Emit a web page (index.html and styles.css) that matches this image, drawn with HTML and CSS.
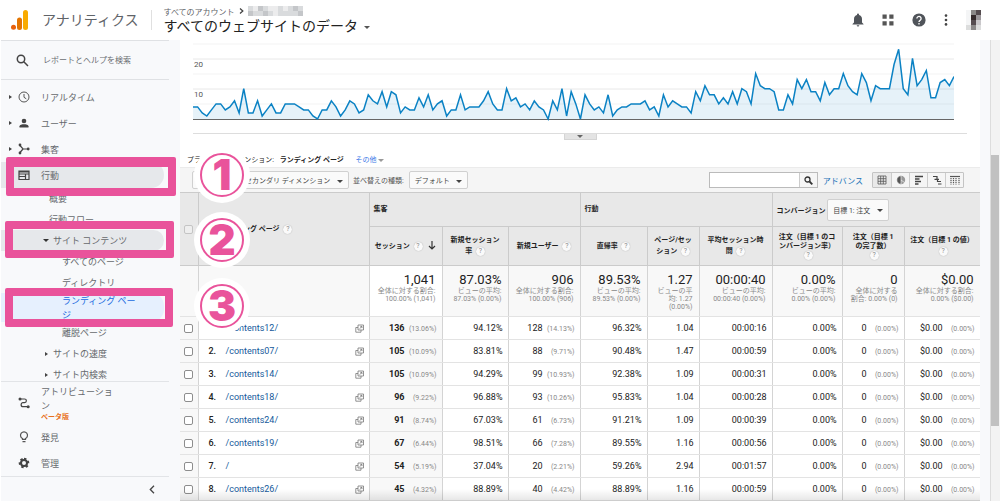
FILE: index.html
```
<!DOCTYPE html>
<html lang="ja">
<head>
    <meta charset="UTF-8">
    <meta name="viewport" content="width=device-width, initial-scale=1.0">
    <title>アナリティクス - ランディング ページ</title>
    <link rel="stylesheet" href="styles.css">
</head>
<body>
    <header class="topbar">
        <svg class="logo" viewBox="0 0 18 20"><rect x="12" y="0" width="5" height="20" rx="2.5" fill="#f9ab00"/><rect x="6" y="7.500" width="5" height="12.500" rx="2.500" fill="#e37400"/><circle cx="2.500" cy="17.300" r="2.500" fill="#e8600c"/></svg>
        <span class="product">アナリティクス</span>
        <div class="account">
            <div class="breadcrumb">すべてのアカウント
                <svg width="5" height="8" viewBox="0 0 5 8"><path d="M1 1.500 3.800 4 1 6.500" fill="none" stroke="#444" stroke-width="1.300"/></svg>
                <svg class="masked" width="55" height="10" viewBox="0 0 11 2" shape-rendering="crispEdges"><path fill="#d9dbdd" d="M0 0h11v2H0z"/><path fill="#c4c6c9" d="M0 1h1v1H0zM2 0h1v1H2zM3 1h1v1H3zM9 0h1v1H9zM10 1h1v1h-1z"/><path fill="#ececed" d="M1 0h1v1H1zM4 0h2v1H4zM5 1h1v1H5zM7 0h1v1H7z"/></svg>
            </div>
            <button class="view-picker">すべてのウェブサイトのデータ <i class="caret"></i></button>
        </div>
        <div class="tools">
            <button aria-label="通知"><svg width="12" height="14" viewBox="0 0 12 14" fill="#50545a"><path d="M6 0.500a1 1 0 0 1 1 1v.6c1.900.5 3 2 3 4v3.400l1.500 1.500v.5H.5V11L2 9.500V6.100c0-2 1.100-3.500 3-4v-.6a1 1 0 0 1 1-1zM4.700 12.300h2.600a1.300 1.300 0 0 1-2.600 0z"/></svg></button>
            <button aria-label="アプリ"><svg width="12" height="12" viewBox="0 0 12 12" fill="#555"><path d="M.5.500h4.200v4.200H.5zM7.300.500h4.200v4.200H7.300zM.5 7.300h4.200v4.200H.5zM7.300 7.300h4.200v4.200H7.300z"/></svg></button>
            <button aria-label="ヘルプ"><svg width="14" height="14" viewBox="0 0 14 14"><circle cx="7" cy="7" r="6.600" fill="#50545a"/><path d="M4.900 5.500a2.100 2.100 0 1 1 3.300 1.700C7.300 7.800 7 8.100 7 9M7 10v1.400" fill="none" stroke="#fff" stroke-width="1.300"/></svg></button>
            <button aria-label="その他のメニュー"><svg width="4" height="12" viewBox="0 0 4 12" fill="#444"><circle cx="2" cy="1.600" r="1.300"/><circle cx="2" cy="6" r="1.300"/><circle cx="2" cy="10.400" r="1.300"/></svg></button>
            <svg class="avatar" width="15" height="20" viewBox="0 0 3 4" shape-rendering="crispEdges"><path fill="#f4f5f6" d="M0 0h3v4H0z"/><path fill="#8b8989" d="M1 0h1v1H1zM1 3h1v1H1z"/><path fill="#554c50" d="M2 0h1v1H2zM1 2h1v1H1z"/><path fill="#352b2d" d="M1 1h1v1H1z"/><path fill="#9c989c" d="M2 1h1v1H2z"/><path fill="#c9c7ca" d="M2 2h1v1H2z"/><path fill="#dcdddd" d="M0 3h1v1H0zM2 3h1v1H2z"/></svg>
        </div>
    </header>

    <div class="layout">
        <aside class="sidebar">
            <label class="report-search">
                <svg width="13" height="13" viewBox="0 0 13 13" fill="none" stroke="#444" stroke-width="1.500"><circle cx="5" cy="5" r="3.700"/><path d="m7.800 7.800 4.200 4.200"/></svg>
                <input type="text" placeholder="レポートとヘルプを検索">
            </label>
            <nav class="reports">
                <a href="#" class="item"><i class="arrow"></i><svg class="icon" viewBox="0 0 12 12" fill="none" stroke="#555"><circle cx="6" cy="6" r="5"/><path d="M6 3v3.300L8.300 7.800"/></svg>リアルタイム</a>
                <a href="#" class="item"><i class="arrow"></i><svg class="icon" viewBox="0 0 12 12" fill="#444"><circle cx="6" cy="4" r="2.300"/><path d="M1.500 10.500V9.300C1.500 7.700 4 7.200 6 7.200s4.500.5 4.500 2.100v1.200z"/></svg>ユーザー</a>
                <a href="#" class="item"><i class="arrow"></i><svg class="icon" viewBox="0 0 12 12" fill="none" stroke="#444" stroke-width="1.200"><path d="M1.500 2 5 6h5M1.500 10 5 6"/><g fill="#444" stroke="none"><circle cx="2" cy="2" r="1.400"/><circle cx="2" cy="10" r="1.400"/><circle cx="10.200" cy="6" r="1.400"/></g></svg>集客</a>
                <a href="#" class="item active"><svg class="icon" viewBox="0 0 12 12" fill="none" stroke="#444" stroke-width="1.200"><path d="M1 2h10v8.500H1zM1 3h10M1 5h10M7.500 5v5.500M1 7.500h6.500"/></svg>行動</a>
                <a href="#" class="sub">概要</a>
                <a href="#" class="sub">行動フロー</a>
                <a href="#" class="sub group active"><i class="arrow down"></i>サイト コンテンツ</a>
                <a href="#" class="sub leaf">すべてのページ</a>
                <a href="#" class="sub leaf">ディレクトリ</a>
                <a href="#" class="sub leaf current">ランディング ペー<br>ジ</a>
                <a href="#" class="sub leaf">離脱ページ</a>
                <a href="#" class="sub group"><i class="arrow"></i>サイトの速度</a>
                <a href="#" class="sub group"><i class="arrow"></i>サイト内検索</a>
            </nav>
            <div class="fixed-items">
                <a href="#" class="item attribution"><svg class="icon" viewBox="0 0 12 12" fill="none" stroke="#444" stroke-width="1.200"><path d="M2 2h4.500c2.500 0 2.500 3.700 0 3.700H5c-2.500 0-2.500 4 0 4h5"/><g fill="#444" stroke="none"><circle cx="2" cy="2" r="1.500"/><circle cx="10.200" cy="9.700" r="1.500"/></g></svg><span>アトリビューショ<br>ン<small>ベータ版</small></span></a>
                <a href="#" class="item"><svg class="icon" viewBox="0 0 12 12" fill="none" stroke="#555" stroke-width="1.200"><path d="M4.500 8.300V7.500a3.500 3.500 0 1 1 3 0v.8zM4.500 10.700h3"/></svg>発見</a>
                <a href="#" class="item"><svg class="icon" viewBox="0 0 12 12"><path fill="none" stroke="#444" stroke-width="2.600" stroke-dasharray="2.200 2" d="M6 2a4 4 0 1 1 0 8 4 4 0 0 1 0-8z"/><circle cx="6" cy="6" r="3" fill="none" stroke="#444" stroke-width="2"/></svg>管理</a>
            </div>
            <button class="collapse" aria-label="折りたたむ"><svg width="6" height="9" viewBox="0 0 6 9"><path d="M5 .8 1.300 4.500 5 8.200" fill="none" stroke="#444" stroke-width="1.300"/></svg></button>
        </aside>

        <main class="report">
            <div class="chart">
                <span class="tick tick-20">20</span>
                <span class="tick tick-10">10</span>
                <svg id="sessions-chart" preserveAspectRatio="none"></svg>
            </div>
            <div class="splitter"><button aria-label="グラフを閉じる"><i class="caret"></i></button></div>

            <div class="dimensions">プライマリ ディメンション: <b>ランディング ページ</b> <a href="#">その他 <i class="caret"></i></a></div>

            <div class="toolbar">
                <button class="drop secondary">セカンダリ ディメンション <i class="caret"></i></button>
                <span class="sort-label">並べ替えの種類:</span>
                <button class="drop">デフォルト <i class="caret"></i></button>
                <div class="table-search">
                    <input type="text" aria-label="表を検索">
                    <button aria-label="検索"><svg width="9" height="9" viewBox="0 0 9 9" fill="none" stroke="#333" stroke-width="1.300"><circle cx="3.500" cy="3.500" r="2.500"/><path d="m5.500 5.500 2.800 2.800" stroke-width="1.800"/></svg></button>
                </div>
                <a href="#" class="advanced">アドバンス</a>
                <div class="views">
                    <button class="on" aria-label="表"><svg viewBox="0 0 10 10" fill="none" stroke="#555" stroke-width=".8"><path d="M1 1h8v8H1zM1 3.700h8M1 6.300h8M3.700 1v8M6.300 1v8"/></svg></button>
                    <button aria-label="割合"><svg viewBox="0 0 10 10"><circle cx="5" cy="5" r="4.200" fill="#999"/><path d="M5 5V.8A4.200 4.200 0 0 0 5 9.200zM5 5l3.500 2.500" fill="#555" stroke="#fff" stroke-width=".6"/></svg></button>
                    <button aria-label="パフォーマンス"><svg viewBox="0 0 10 10" stroke="#444" stroke-width="1.400"><path d="M1 1.500h8M1 4h4.500M1 6.500h6M1 9h3.500"/></svg></button>
                    <button aria-label="比較"><svg viewBox="0 0 10 10" fill="none" stroke="#444" stroke-width="1.200"><path d="M1 1.500h4.500M5 1v3.500M2.500 4.300H7M5.500 4v3M5 6.500h4M6 9h3.500"/></svg></button>
                    <button aria-label="ピボット"><svg viewBox="0 0 10 10" fill="none" stroke="#555" stroke-width="1.200"><path d="M0 1.500h10"/><path d="M1 3v6.500M3.500 3v6.500M6 3v6.500M9 3v6.500" stroke-dasharray="1.300 .7"/></svg></button>
                </div>
            </div>

            <table class="data">
                <colgroup>
                    <col class="c-check"><col class="c-page"><col class="c-sessions"><col class="c-rate"><col class="c-users"><col class="c-bounce"><col class="c-pages"><col class="c-time"><col class="c-conv"><col class="c-done"><col class="c-value">
                </colgroup>
                <thead>
                    <tr class="groups">
                        <th rowspan="2"><input type="checkbox" aria-label="すべて選択"></th>
                        <th rowspan="2" class="page-head">ランディング ページ <i class="help">?</i></th>
                        <th colspan="3">集客</th>
                        <th colspan="3">行動</th>
                        <th colspan="3">コンバージョン <button class="drop goal">目標 1: 注文 <i class="caret"></i></button></th>
                    </tr>
                    <tr class="metrics">
                        <th class="sorted">セッション <i class="help">?</i> <svg width="8" height="9" viewBox="0 0 8 9" fill="none" stroke="#333" stroke-width="1.200"><path d="M4 0v8M1 5l3 3 3-3"/></svg></th>
                        <th>新規セッション<br>率 <i class="help">?</i></th>
                        <th>新規ユーザー <i class="help">?</i></th>
                        <th>直帰率 <i class="help">?</i></th>
                        <th>ページ/セッ<br>ション <i class="help">?</i></th>
                        <th>平均セッション時<br>間 <i class="help">?</i></th>
                        <th class="tight">注文（目標 1 のコ<br>ンバージョン率）<br><i class="help">?</i></th>
                        <th class="tight">注文（目標 1<br>の完了数）<br><i class="help">?</i></th>
                        <th>注文（目標 1 の値）<br><i class="help">?</i></th>
                    </tr>
                </thead>
                <tbody id="rows">
                    <tr class="totals">
                        <td></td>
                        <td></td>
                        <td class="sorted"><strong>1,041</strong>全体に対する割合:<br>100.00% (1,041)</td>
                        <td><strong>87.03%</strong>ビューの平均:<br>87.03% (0.00%)</td>
                        <td><strong>906</strong>全体に対する割合:<br>100.00% (906)</td>
                        <td><strong>89.53%</strong>ビューの平均:<br>89.53% (0.00%)</td>
                        <td><strong>1.27</strong>ビューの平<br>均: 1.27<br>(0.00%)</td>
                        <td><strong>00:00:40</strong>ビューの平均:<br>00:00:40 (0.00%)</td>
                        <td><strong>0.00%</strong>ビューの平均:<br>0.00% (0.00%)</td>
                        <td><strong>0</strong>全体に対する<br>割合: 0.00% (0)</td>
                        <td><strong>$0.00</strong>全体に対する割合:<br>0.00% ($0.00)</td>
                    </tr>
                </tbody>
            </table>
        </main>
        <div class="scrollbar"><div class="thumb"></div></div>
    </div>

    <!-- tutorial steps drawn over the screen -->
    <div class="frame frame-1"></div>
    <div class="frame frame-2"></div>
    <div class="frame frame-3"></div>
    <div class="step step-1"><span>1</span></div>
    <div class="step step-2"><span>2</span></div>
    <div class="step step-3"><span>3</span></div>

    <script src="script.js"></script>
</body>
</html>
```
FILE: styles.css
```
:root {
    --pink: #e9539b;
    --link: #15599b;
    --line: #d4d4d4;
}

* {
    box-sizing: border-box;
}

body {
    margin: 0;
    height: 100vh;
    display: flex;
    flex-direction: column;
    overflow: hidden;
    position: relative;
    background: #fff;
    color: #222;
    font-family: Roboto, "Noto Sans CJK JP", sans-serif;
    font-size: 9px;
}

a {
    text-decoration: none;
    color: inherit;
}

button, input {
    font-family: inherit;
    margin: 0;
}

button {
    background: none;
    border: 0;
    padding: 0;
    color: inherit;
}

svg {
    flex: none;
}

.caret {
    display: inline-block;
    border: 3px solid transparent;
    border-top-color: currentColor;
    border-bottom: 0;
    vertical-align: middle;
}

/* header */
.topbar {
    display: flex;
    align-items: center;
    flex: none;
    height: 40px;
    padding: 0 19px 0 11px;
}

.logo {
    width: 18px;
    height: 20px;
}

.product {
    margin-left: 13px;
    padding-right: 13px;
    font-size: 14px;
    line-height: 20px;
    color: #5f6368;
    border-right: 1px solid #e0e0e0;
}

.account {
    padding-left: 11px;
}

.breadcrumb {
    display: flex;
    align-items: center;
    gap: 4px;
    height: 12px;
    font-size: 8px;
    color: #5f6368;
}

.view-picker {
    display: block;
    font-size: 14px;
    line-height: 18px;
    color: #222;
}

.view-picker .caret {
    margin-left: 3px;
    color: #555;
}

.tools {
    display: flex;
    align-items: center;
    gap: 18px;
    margin-left: auto;
}

.tools button {
    display: flex;
}

.layout {
    display: flex;
    flex: 1;
    min-height: 0;
}

/* left menu */
.sidebar {
    display: flex;
    flex-direction: column;
    flex: none;
    width: 179px;
    margin-left: 1px;
    background: #f8f9fb;
    color: #66696d;
}

.report-search {
    display: flex;
    align-items: center;
    flex: none;
    gap: 14px;
    height: 40px;
    margin-right: 11px;
    padding-left: 15px;
    border-top: 1px solid #dfe1e4;
    border-bottom: 1px solid #dfe1e4;
}

.report-search input {
    width: 120px;
    border: 0;
    padding: 0;
    background: none;
    font-size: 8px;
}

.report-search input::placeholder {
    color: #6b6e72;
}

.reports {
    flex: 1;
    min-height: 0;
    padding-top: 4px;
    overflow: hidden;
}

.item {
    display: flex;
    align-items: center;
    height: 26px;
    padding-left: 17px;
    position: relative;
}

.icon {
    width: 12px;
    height: 12px;
    margin-right: 11px;
}

.arrow {
    border: 2px solid transparent;
    border-left: 3px solid #444;
    border-right: 0;
}

.item .arrow {
    position: absolute;
    left: 8px;
}

.arrow.down {
    border: 3px solid transparent;
    border-top-color: #333;
    border-bottom: 0;
}

.item.active, .sub.active {
    margin-right: 16px;
    background: #e6e8eb;
    border-radius: 0 13px 13px 0;
}

.sub {
    display: flex;
    align-items: center;
    height: 21px;
    padding-left: 48px;
}

.sub.group {
    gap: 4px;
    padding-left: 42px;
}

.sub.group .arrow:not(.down) {
    margin: 0 1px 0 2px;
}

.sub.leaf {
    padding-left: 61px;
}

.sub.current {
    height: 29px;
    margin-right: 16px;
    background: #e6f0fe;
    border-radius: 0 13px 13px 0;
    color: #1a6be0;
    line-height: 14px;
}

.fixed-items {
    flex: none;
    margin-right: 11px;
    border-top: 1px solid #e2e4e7;
    border-bottom: 1px solid #e2e4e7;
}

.attribution {
    height: 42px;
    line-height: 14px;
}

.attribution small {
    display: block;
    font-size: 7px;
    font-weight: bold;
    line-height: 8px;
    color: #e8711c;
}

.collapse {
    flex: none;
    height: 24px;
    padding-right: 25px;
    text-align: right;
}

/* report */
.report {
    flex: 1;
    min-width: 0;
    overflow: hidden;
    position: relative;
}

/* soft shade where the table runs under the window edge */
.report::after {
    content: "";
    position: absolute;
    left: 0;
    right: 0;
    bottom: 0;
    height: 12px;
    background: linear-gradient(transparent, rgba(0, 0, 0, 0.1));
}

.chart {
    position: relative;
    height: 93px;
    padding: 0 26px 0 13px;
}

.chart svg {
    display: block;
    width: 100%;
    height: 81px;
}

.tick {
    position: absolute;
    left: 14px;
    font-size: 8px;
    line-height: 10px;
    color: #555;
}

.tick-20 {
    top: 20px;
}

.tick-10 {
    top: 50px;
}

.splitter {
    height: 20px;
    margin: 0 13px;
    border-top: 1px solid #ddd;
    text-align: center;
}

.splitter button {
    display: block;
    width: 33px;
    height: 6px;
    margin: 0 auto;
    background: #e4e4e4;
    border: 1px solid #d5d5d5;
    border-top: 0;
    line-height: 3px;
}

.splitter .caret {
    display: block;
    margin: 0 auto;
    width: 0;
    color: #666;
}

.dimensions {
    height: 14px;
    padding-left: 7px;
    font-size: 7px;
    line-height: 14px;
}

.dimensions b {
    margin-left: 4px;
}

.dimensions a {
    margin-left: 10px;
    color: #3b78e7;
}

.dimensions .caret {
    color: #999;
}

.toolbar {
    display: flex;
    align-items: center;
    height: 25px;
    padding: 0 16px 0 12px;
    background: #f5f5f5;
    border-top: 1px solid #ebebeb;
    font-size: 7px;
    color: #555;
}

.drop {
    height: 18px;
    padding: 0 5px;
    background: #fafafa;
    border: 1px solid #d0d0d0;
    border-radius: 2px;
    font-size: 7px;
    white-space: nowrap;
    color: #444;
}

.drop .caret {
    margin-left: 5px;
}

.secondary {
    width: 157px;
    text-align: right;
}

.sort-label {
    margin: 0 5px 0 4px;
}

.table-search {
    display: flex;
    width: 109px;
    height: 16px;
    margin-left: auto;
    border: 1px solid #bbb;
}

.table-search input {
    flex: 1;
    min-width: 0;
    padding: 0 3px;
    border: 0;
    background: #fff;
    font-size: 8px;
}

.table-search button {
    display: flex;
    align-items: center;
    justify-content: center;
    width: 18px;
    border-left: 1px solid #ccc;
}

.advanced {
    margin: 0 9px 0 5px;
    font-size: 8px;
    color: #1a73b8;
}

.views {
    display: flex;
    height: 16px;
    border: 1px solid #c4c4c4;
    border-radius: 1px;
}

.views button {
    display: flex;
    align-items: center;
    justify-content: center;
    width: 18px;
}

.views button + button {
    border-left: 1px solid #ccc;
}

.views svg {
    width: 10px;
    height: 10px;
}

.views .on {
    background: #e9e9e9;
}

/* data table */
.data {
    width: 100%;
    table-layout: fixed;
    border-collapse: collapse;
    border-right: 1px solid var(--line);
}

.c-check { width: 18px; }
.c-page { width: 171px; }
.c-sessions { width: 73px; }
.c-rate { width: 66px; }
.c-users { width: 72px; }
.c-bounce { width: 67px; }
.c-pages { width: 52px; }
.c-time { width: 73px; }
.c-conv { width: 70px; }
.c-done { width: 62px; }
.c-value { width: 76px; }

.data th {
    padding: 0;
    background: #e8e8e8;
    border: 1px solid #cbcbcb;
    font-size: 7px;
    line-height: 11px;
    white-space: nowrap;
}

.data th:first-child {
    border-left: 0;
}

.groups {
    height: 34px;
}

.groups th {
    padding-left: 4px;
    text-align: left;
}

.groups th:first-child {
    padding-left: 0;
    text-align: center;
}

.groups th.page-head {
    padding-left: 17px;
}

.metrics {
    height: 39px;
}

.metrics th {
    border-left-color: #c8c8c8;
}

.data .tight {
    line-height: 9px;
}

.metrics svg {
    margin-left: 4px;
    vertical-align: middle;
}

.help {
    display: inline-block;
    width: 9px;
    height: 9px;
    margin-left: 2px;
    border-radius: 50%;
    background: #fafafa;
    box-shadow: 0 0 1px #999;
    font-size: 7px;
    font-style: normal;
    font-weight: normal;
    line-height: 9px;
    text-align: center;
    color: #888;
}

.goal {
    height: 22px;
}

.data input {
    display: block;
    appearance: none;
    width: 9px;
    height: 9px;
    margin: 0 auto;
    border: 1px solid #8d8d8d;
    border-radius: 2px;
    background: #fff;
}

.data th input {
    border-color: #c4c4c4;
    background: #eee;
}

.data td {
    height: 23px;
    padding: 0 5px 0 0;
    border: 1px solid var(--line);
    border-bottom-color: #e3e3e3;
    border-top-color: #e3e3e3;
    line-height: 12px;
    text-align: right;
    white-space: nowrap;
}

.data td:first-child {
    padding: 0;
    border-left: 0;
    background: #f8f8f8;
}

.data .totals td {
    height: 51px;
    padding: 6px 6px 0 0;
    background: #f8f8f8;
    font-size: 7px;
    line-height: 8px;
    vertical-align: top;
    color: #888;
}

.data .totals .sorted {
    background: #fff;
}

.totals strong {
    display: block;
    font-size: 13px;
    font-weight: normal;
    line-height: 15px;
    color: #222;
}

.data .landing {
    padding: 0 5px 0 10px;
    text-align: left;
}

.landing div {
    display: flex;
    align-items: center;
}

.landing b {
    width: 17px;
    font-weight: 500;
}

.landing a {
    color: var(--link);
}

.landing svg {
    margin-left: auto;
}

.row .sorted {
    background: #f8f8f8;
    font-weight: bold;
}

.share {
    display: inline-block;
    width: 32px;
    font-size: 7px;
    font-weight: normal;
    color: #888;
}

/* page scrollbar */
.scrollbar {
    flex: none;
    width: 20px;
    padding: 115px 1px 0 11px;
    background: linear-gradient(90deg, #f8f9fb 10px, #ddd 10px, #ddd 11px, #f3f3f3 11px);
}

.thumb {
    height: 271px;
    background: #c1c1c1;
}

/* tutorial overlay */
.frame {
    position: absolute;
    border: 8px solid var(--pink);
    border-radius: 2px;
}

.frame-1 {
    left: 6px;
    top: 157px;
    width: 170px;
    height: 39px;
    border-top-width: 10px;
}

.frame-2 {
    left: 5px;
    top: 221px;
    width: 169px;
    height: 37px;
}

.frame-3 {
    left: 5px;
    top: 288px;
    width: 168px;
    height: 39px;
}

.step {
    position: absolute;
    left: 194px;
    display: flex;
    width: 56px;
    height: 56px;
    padding: 6px;
    border-radius: 50%;
    background: #fff;
}

.step span {
    flex: 1;
    border: 2px solid var(--pink);
    border-radius: 50%;
    font-family: Inter, sans-serif;
    font-size: 42px;
    font-weight: 900;
    line-height: 40px;
    text-align: center;
    color: var(--pink);
}

.step-1 {
    top: 147px;
}

.step-2 {
    top: 212px;
}

.step-3 {
    top: 278px;
}
```
FILE: script.js
```
// daily sessions
const sessions = [
    4, 4, 2, 1, 3, 5, 5, 3, 4, 6, 2, 10, 2, 2, 6, 1, 3, 5, 2, 2, 5, 5, 5, 4, 3, 3, 1, 0, 3, 3,
    6, 4, 1, 3, 6, 5, 2, 3, 8, 6, 5, 9, 4, 9, 8, 2, 4, 3, 3, 7, 4, 8, 3, 5, 6, 1, 3, 3, 8, 3,
    4, 4, 4, 6, 9, 5, 3, 3, 10, 6, 7, 4, 5, 3, 6, 4, 3, 0, 6, 3, 10, 1, 9, 5, 0, 8, 5, 3, 4, 2,
    8, 1, 3, 4, 4, 5, 5, 5, 6, 3, 4, 1, 8, 4, 6, 5, 4, 4, 2, 9, 6, 11, 8, 8, 5, 7, 5, 9, 5, 10,
    9, 5, 15, 11, 10, 10, 9, 3, 3, 8, 5, 13, 10, 13, 9, 9, 6, 12, 8, 10, 10, 15, 11, 9, 8, 15,
    12, 6, 11, 10, 10, 10, 18, 23, 10, 8, 20, 11, 13, 16, 7, 7, 12, 13, 11, 14
];

const chartHeight = 81;
const baseline = 79;
const last = sessions.length - 1;
const points = sessions.map((value, day) => `${day},${(baseline - value * 3.03).toFixed(1)}`).join(' ');
const grid = [4, 19, 34, 49, 64].map((y, i) => `<path d="M0 ${y}H${last}" stroke="${i % 2 ? '#e8e8e8' : '#f3f3f3'}" vector-effect="non-scaling-stroke"/>`).join('');

const chart = document.getElementById('sessions-chart');
chart.setAttribute('viewBox', `0 0 ${last} ${chartHeight}`);
chart.innerHTML = `
    ${grid}
    <polygon points="0,${baseline} ${points} ${last},${baseline}" fill="#0b82c4" fill-opacity="0.1"/>
    <path d="M0 79.5H${last}" stroke="#666" vector-effect="non-scaling-stroke"/>
    <polyline points="${points}" fill="none" stroke="#0b82c4" stroke-width="1.5" vector-effect="non-scaling-stroke"/>
`;

// page, sessions, share, new session rate, new users, share, bounce rate, pages, time
const rows = [
    ['/contents12/', 136, '13.06%', '94.12%', 128, '14.13%', '96.32%', '1.04', '00:00:16'],
    ['/contents07/', 105, '10.09%', '83.81%', 88, '9.71%', '90.48%', '1.47', '00:00:59'],
    ['/contents14/', 105, '10.09%', '94.29%', 99, '10.93%', '92.38%', '1.09', '00:00:31'],
    ['/contents18/', 96, '9.22%', '96.88%', 93, '10.26%', '95.83%', '1.04', '00:00:28'],
    ['/contents24/', 91, '8.74%', '67.03%', 61, '6.73%', '91.21%', '1.09', '00:00:39'],
    ['/contents19/', 67, '6.44%', '98.51%', 66, '7.28%', '89.55%', '1.16', '00:00:56'],
    ['/', 54, '5.19%', '37.04%', 20, '2.21%', '59.26%', '2.94', '00:01:57'],
    ['/contents26/', 45, '4.32%', '88.89%', 40, '4.42%', '88.89%', '1.16', '00:00:59']
];

const share = text => `<span class="share">(${text})</span>`;
const openIcon = '<svg width="9" height="9" viewBox="0 0 9 9" fill="none" stroke="#777" stroke-width=".8"><path d="M3 1h5.500v5H3zM3 3.500H.8v4.700H6V6M4.500 4.700 7 2.500M5.300 2.400H7v1.700"/></svg>';

document.getElementById('rows').innerHTML += rows.map((r, i) => `
    <tr class="row">
        <td><input type="checkbox" aria-label="${r[0]}"></td>
        <td class="landing"><div><b>${i + 1}.</b><a href="#">${r[0]}</a>${openIcon}</div></td>
        <td class="sorted">${r[1]}${share(r[2])}</td>
        <td>${r[3]}</td>
        <td>${r[4]}${share(r[5])}</td>
        <td>${r[6]}</td>
        <td>${r[7]}</td>
        <td>${r[8]}</td>
        <td>0.00%</td>
        <td>0${share('0.00%')}</td>
        <td>$0.00${share('0.00%')}</td>
    </tr>
`).join('');
```
